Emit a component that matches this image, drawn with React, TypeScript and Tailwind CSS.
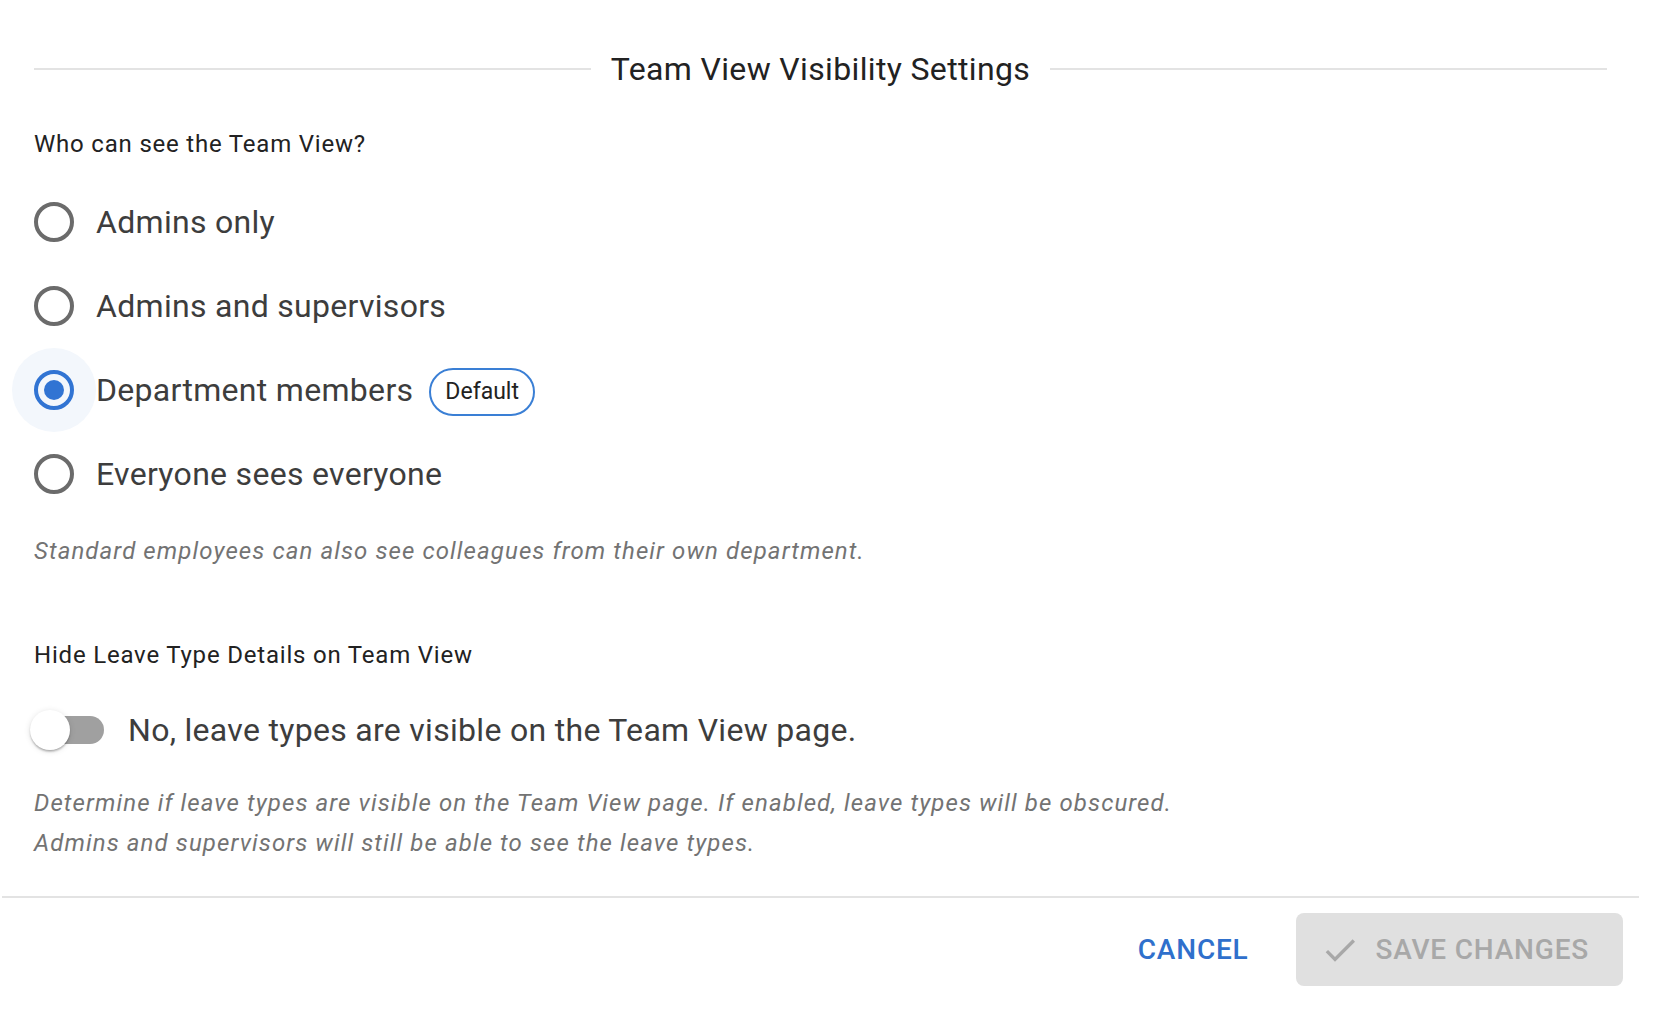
import React from 'react';

const options = [
  { label: 'Admins only', checked: false },
  { label: 'Admins and supervisors', checked: false },
  { label: 'Department members', checked: true, badge: 'Default' },
  { label: 'Everyone sees everyone', checked: false },
];

const RadioRow = ({ label, checked, badge }: { label: string; checked: boolean; badge?: string }) => (
  <label className="flex h-[84px] items-center ml-[-22px]">
    <span
      className={`flex h-[84px] w-[84px] items-center justify-center rounded-full ${checked ? 'bg-[#f3f7fc]' : ''}`}
    >
      <span
        className={`flex h-[40px] w-[40px] items-center justify-center rounded-full border-[4px] ${
          checked ? 'border-[#3174d3]' : 'border-[#6b6b6b]'
        }`}
      >
        {checked && <span className="h-[20px] w-[20px] rounded-full bg-[#3174d3]" />}
      </span>
    </span>
    <span className="text-[32px] leading-[48px] tracking-[0.3px] text-[#3d3d3d]">{label}</span>
    {badge && (
      <span className="ml-[16px] mt-[4px] flex h-[48px] items-center rounded-full border-2 border-[#3a7fd5] px-[14px] text-[23px] text-[#222]">
        {badge}
      </span>
    )}
  </label>
);

const App = () => {
  return (
    <div className="min-h-screen bg-white font-['Roboto',sans-serif]">
      <div className="w-[1641px]">
        <div className="px-[34px] pt-[44px]">
          <div className="flex items-center gap-5">
            <div className="h-[2px] flex-1 bg-[#e3e3e3]" />
            <h2 className="text-[32px] leading-[50px] tracking-[0.35px] text-[#222]">Team View Visibility Settings</h2>
            <div className="h-[2px] flex-1 bg-[#e3e3e3]" />
          </div>

          <p className="mt-[32px] text-[24px] leading-[36px] tracking-[0.8px] text-[#222]">Who can see the Team View?</p>

          <div className="mt-[18px] flex flex-col">
            {options.map((o) => (
              <RadioRow key={o.label} label={o.label} checked={o.checked} badge={o.badge} />
            ))}
          </div>

          <p className="mt-[15px] text-[24px] italic leading-[40px] tracking-[1.1px] text-[#737373]">
            Standard employees can also see colleagues from their own department.
          </p>

          <p className="mt-[64px] text-[24px] leading-[40px] tracking-[0.8px] text-[#222]">
            Hide Leave Type Details on Team View
          </p>

          <div className="mt-[17px] flex h-[76px] items-center">
            <div className="relative ml-[-4px] h-[40px] w-[74px]">
              <span className="absolute left-[6px] top-[6px] h-[28px] w-[68px] rounded-full bg-[#a0a0a0]" />
              <span className="absolute left-0 top-0 h-[40px] w-[40px] rounded-full bg-white shadow-[0_2px_2px_-1px_rgba(0,0,0,0.2),0_2px_2px_0_rgba(0,0,0,0.14),0_1px_6px_0_rgba(0,0,0,0.12)]" />
            </div>
            <span className="ml-[24px] text-[32px] leading-[48px] tracking-[0.3px] text-[#3d3d3d]">
              No, leave types are visible on the Team View page.
            </span>
          </div>

          <div className="mt-[15px] text-[24px] italic leading-[40px] tracking-[1.1px] text-[#737373]">
            <p>Determine if leave types are visible on the Team View page. If enabled, leave types will be obscured.</p>
            <p>Admins and supervisors will still be able to see the leave types.</p>
          </div>
        </div>

        <div className="mx-[2px] mt-[33px] h-[2px] bg-[#e3e3e3]" />

        <div className="flex items-center justify-end gap-[31px] pr-[18px] pt-[15px]">
          <button className="h-[73px] px-4 text-[28px] font-medium tracking-[0.8px] text-[#2f70cc]">CANCEL</button>
          <button
            disabled
            className="flex h-[73px] items-center rounded-[8px] bg-[#e0e0e0] pl-[24px] pr-[34px] text-[28px] font-medium tracking-[0.8px] text-[#a8a8a8]"
          >
            <svg viewBox="0 0 24 24" className="mr-4 h-[40px] w-[40px]" fill="#a8a8a8">
              <path d="M9 16.17 4.83 12l-1.42 1.41L9 19 21 7l-1.41-1.41z" />
            </svg>
            SAVE CHANGES
          </button>
        </div>
      </div>
    </div>
  );
};

export default App;
